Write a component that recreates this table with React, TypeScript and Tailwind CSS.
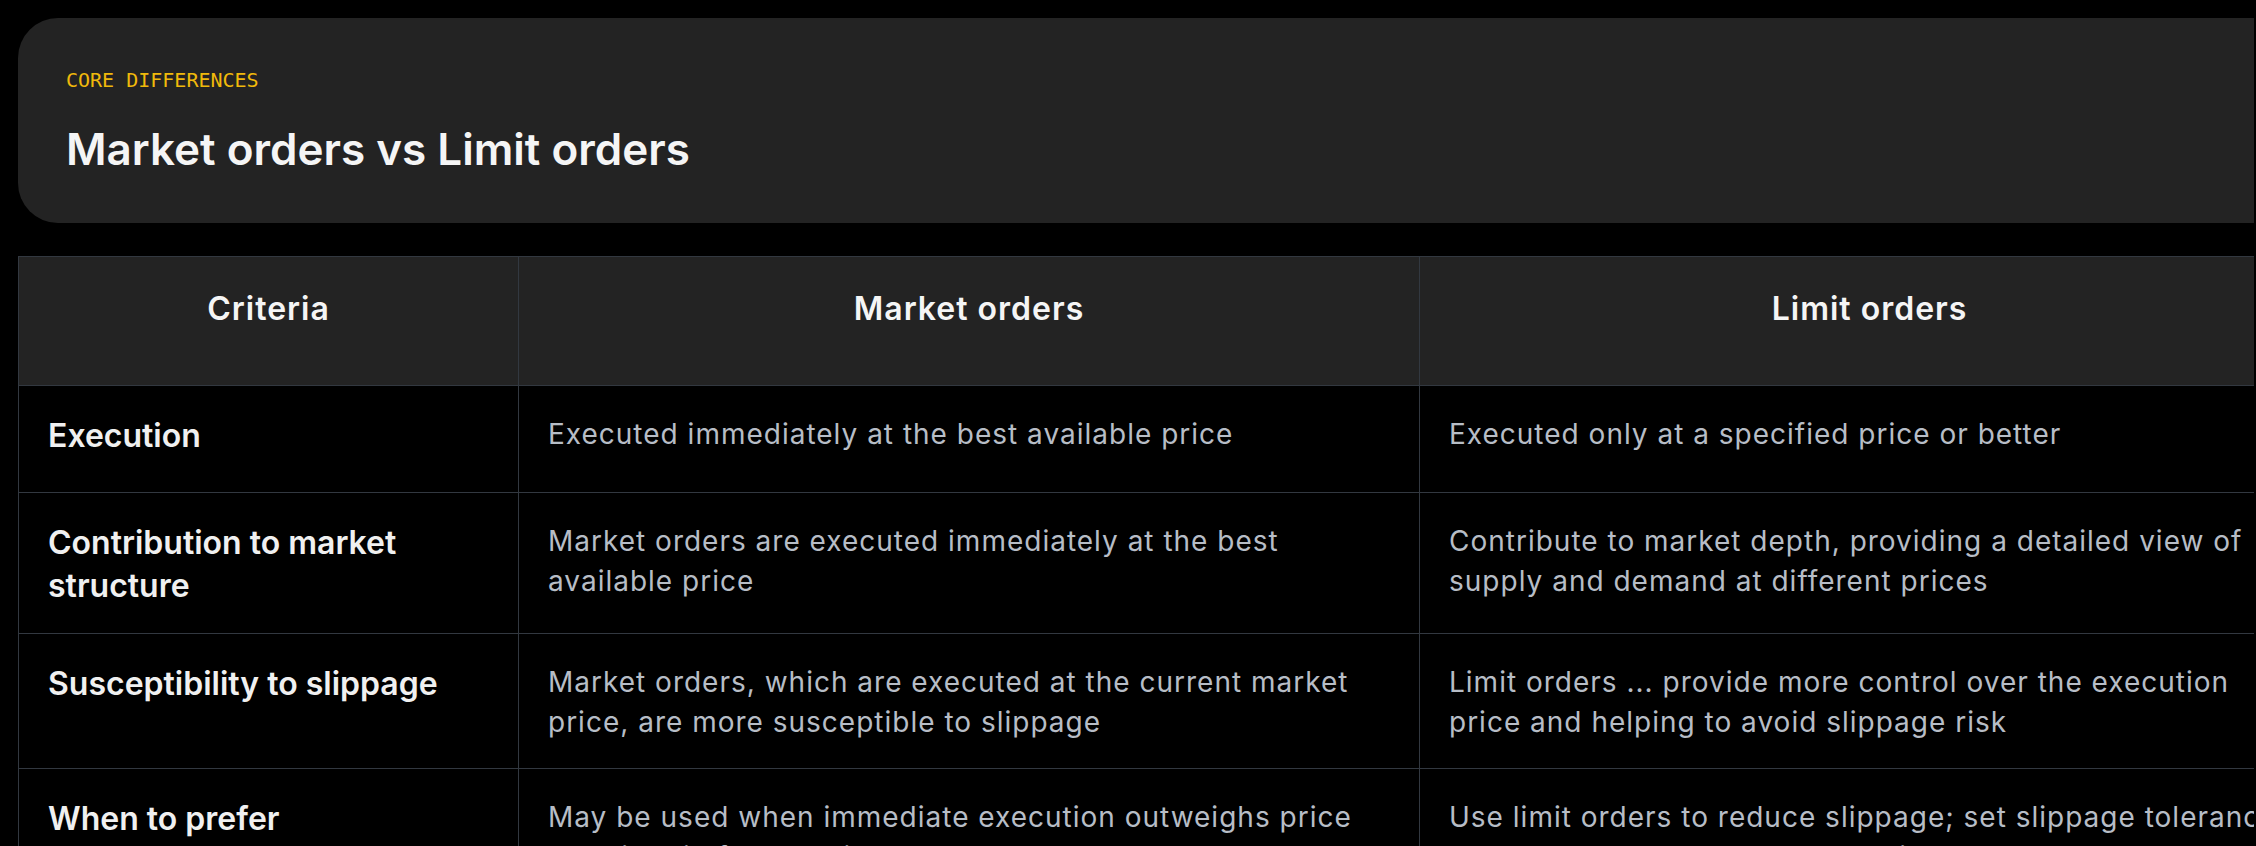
const rows = [
  {
    label: "Execution",
    market: "Executed immediately at the best available price",
    limit: "Executed only at a specified price or better",
    minH: "min-h-[107px]",
  },
  {
    label: "Contribution to market structure",
    market: "Market orders are executed immediately at the best available price",
    limit: "Contribute to market depth, providing a detailed view of supply and demand at different prices",
    minH: "",
  },
  {
    label: "Susceptibility to slippage",
    market: "Market orders, which are executed at the current market price, are more susceptible to slippage",
    limit: "Limit orders ... provide more control over the execution price and helping to avoid slippage risk",
    minH: "",
  },
  {
    label: "When to prefer",
    market: "May be used when immediate execution outweighs price certainty in fast-moving markets",
    limit: "Use limit orders to reduce slippage; set slippage tolerance when you need a guaranteed price",
    minH: "",
  },
];

export default function App() {
  return (
    <div className="min-h-screen overflow-hidden bg-black pt-[18px] font-['Inter','Noto_Sans',sans-serif]">
      <div className="ml-[18px] w-[2236px] overflow-hidden">
        <div className="w-[2301px]">
          {/* Intro card */}
          <section className="rounded-[40px] bg-[#232323] px-12 pt-12 pb-[47px]">
            <p className="font-['DejaVu_Sans_Mono','Liberation_Mono',monospace] text-[20px] leading-7 text-[#f0b90b]">
              CORE DIFFERENCES
            </p>
            <h2 className="mt-[29px] text-[44px] leading-[53px] font-semibold text-[#f5f5f5]">
              Market orders vs Limit orders
            </h2>
          </section>

          {/* Comparison table */}
          <div className="mt-[33px] grid grid-cols-[500px_901px_900px] border-t border-l border-[#323840]">
            {["Criteria", "Market orders", "Limit orders"].map((h) => (
              <div
                key={h}
                className="h-[129px] border-r border-b border-[#323840] bg-[#232323] px-[29px] pt-8 text-center text-[32px] leading-10 font-semibold tracking-[1px] text-[#f5f5f5]"
              >
                {h}
              </div>
            ))}

            {rows.map((r) => (
              <div key={r.label} className="contents">
                <div
                  className={`${r.minH} border-r border-b border-[#323840] px-[29px] pt-7 pb-[26px] text-[32px] leading-[43px] font-semibold text-[#f0f0f0]`}
                >
                  {r.label}
                </div>
                <div className={`${r.minH} border-r border-b border-[#323840] px-[29px] pt-7 pb-[26px] text-[28px] leading-10 tracking-[1px] text-[#b7bdc6]`}>
                  {r.market}
                </div>
                <div className={`${r.minH} border-r border-b border-[#323840] px-[29px] pt-7 pb-[26px] text-[28px] leading-10 tracking-[1px] text-[#b7bdc6]`}>
                  {r.limit}
                </div>
              </div>
            ))}
          </div>
        </div>
      </div>
    </div>
  );
}
